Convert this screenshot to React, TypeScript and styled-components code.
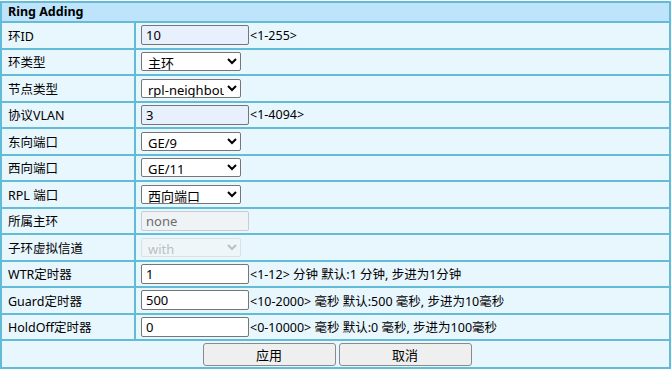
import styled, { createGlobalStyle } from "styled-components";

const GlobalStyle = createGlobalStyle`
  html, body {
    margin: 0;
    padding: 0;
    background: #ffffff;
  }
  body {
    padding-top: 1px;
    font-family: "Noto Sans", "Noto Sans CJK SC", sans-serif;
    font-size: 12.5px;
    color: #000;
  }
`

const FormTable = styled.table`
  width: 671px;
  border-collapse: separate;
  border-spacing: 2px;
  background-color: #62bbd7;
  table-layout: fixed;
`

const Col = styled.col<{ $width?: number }>`
  width: ${props => props.$width ? `${props.$width}px` : 'auto'};
`

const HeaderCell = styled.td`
  height: 18px;
  padding: 0 0 0 6px;
  background-color: #bde4fb;
  font-weight: bold;
  font-size: 12.5px;
  line-height: 18px;
`

const LabelCell = styled.td`
  height: 24.5px;
  padding: 0 0 0 6px;
  background-color: #e8f6fe;
  white-space: nowrap;
`

const ValueCell = styled.td`
  height: 24.5px;
  padding: 0 0 0 5px;
  background-color: #e8f6fe;
  white-space: nowrap;
`

const Field = styled.div`
  display: flex;
  align-items: center;
`

const TextInput = styled.input<{ $filled?: boolean }>`
  box-sizing: border-box;
  width: 108px;
  height: 20px;
  margin: 0;
  padding: 0 4px;
  border: 1px solid #767676;
  border-radius: 2px;
  background-color: ${props => props.$filled ? '#e8f0fe' : '#ffffff'};
  font-family: inherit;
  font-size: 13px;
  color: #000;

  &:disabled {
    background-color: #eff3f6;
    border-color: #c7cdd1;
    color: #6d6d6d;
  }
`

const Select = styled.select`
  box-sizing: border-box;
  width: 100px;
  height: 19px;
  margin: 0;
  padding: 0 0 0 2px;
  border: 1px solid #767676;
  border-radius: 2px;
  background-color: #ffffff;
  font-family: inherit;
  font-size: 13px;
  color: #000;

  &:disabled {
    background-color: #f3f6f8;
    border-color: #d2d8dc;
    color: #a8a8a8;
  }
`

const Hint = styled.span`
  margin-left: 1px;
`

const ButtonCell = styled.td`
  height: 26px;
  padding: 0;
  background-color: #e8f6fe;
`

const ButtonBar = styled.div`
  display: flex;
  justify-content: center;
  gap: 3px;
  padding-left: 3px;
`

const Button = styled.button`
  width: 133px;
  height: 23px;
  margin: 0;
  border: 1px solid #8a8a8a;
  border-radius: 3px;
  background-color: #efefef;
  font-family: inherit;
  font-size: 13px;
  color: #000;
  cursor: pointer;
`

type Row = {
  label: string
  kind: 'input' | 'select'
  value: string
  filled?: boolean
  disabled?: boolean
  hint?: string
}

const rows: Row[] = [
  { label: '环ID', kind: 'input', value: '10', filled: true, hint: '<1-255>' },
  { label: '环类型', kind: 'select', value: '主环' },
  { label: '节点类型', kind: 'select', value: 'rpl-neighbour' },
  { label: '协议VLAN', kind: 'input', value: '3', filled: true, hint: '<1-4094>' },
  { label: '东向端口', kind: 'select', value: 'GE/9' },
  { label: '西向端口', kind: 'select', value: 'GE/11' },
  { label: 'RPL 端口', kind: 'select', value: '西向端口' },
  { label: '所属主环', kind: 'input', value: 'none', disabled: true },
  { label: '子环虚拟信道', kind: 'select', value: 'with', disabled: true },
  { label: 'WTR定时器', kind: 'input', value: '1', hint: '<1-12> 分钟 默认:1 分钟, 步进为1分钟' },
  { label: 'Guard定时器', kind: 'input', value: '500', hint: '<10-2000> 毫秒 默认:500 毫秒, 步进为10毫秒' },
  { label: 'HoldOff定时器', kind: 'input', value: '0', hint: '<0-10000> 毫秒 默认:0 毫秒, 步进为100毫秒' },
]

const App = () => {
  return (
    <>
      <GlobalStyle />
      <FormTable>
        <colgroup>
          <Col $width={132} />
          <Col />
        </colgroup>
        <tbody>
          <tr>
            <HeaderCell colSpan={2}>Ring Adding</HeaderCell>
          </tr>
          {rows.map(row => (
            <tr key={row.label}>
              <LabelCell>{row.label}</LabelCell>
              <ValueCell>
                <Field>
                  {row.kind === 'input' ? (
                    <TextInput
                      type="text"
                      defaultValue={row.value}
                      $filled={row.filled}
                      disabled={row.disabled}
                    />
                  ) : (
                    <Select defaultValue={row.value} disabled={row.disabled}>
                      <option value={row.value}>{row.value}</option>
                    </Select>
                  )}
                  {row.hint && <Hint>{row.hint}</Hint>}
                </Field>
              </ValueCell>
            </tr>
          ))}
          <tr>
            <ButtonCell colSpan={2}>
              <ButtonBar>
                <Button type="button">应用</Button>
                <Button type="button">取消</Button>
              </ButtonBar>
            </ButtonCell>
          </tr>
        </tbody>
      </FormTable>
    </>
  )
}

export default App
